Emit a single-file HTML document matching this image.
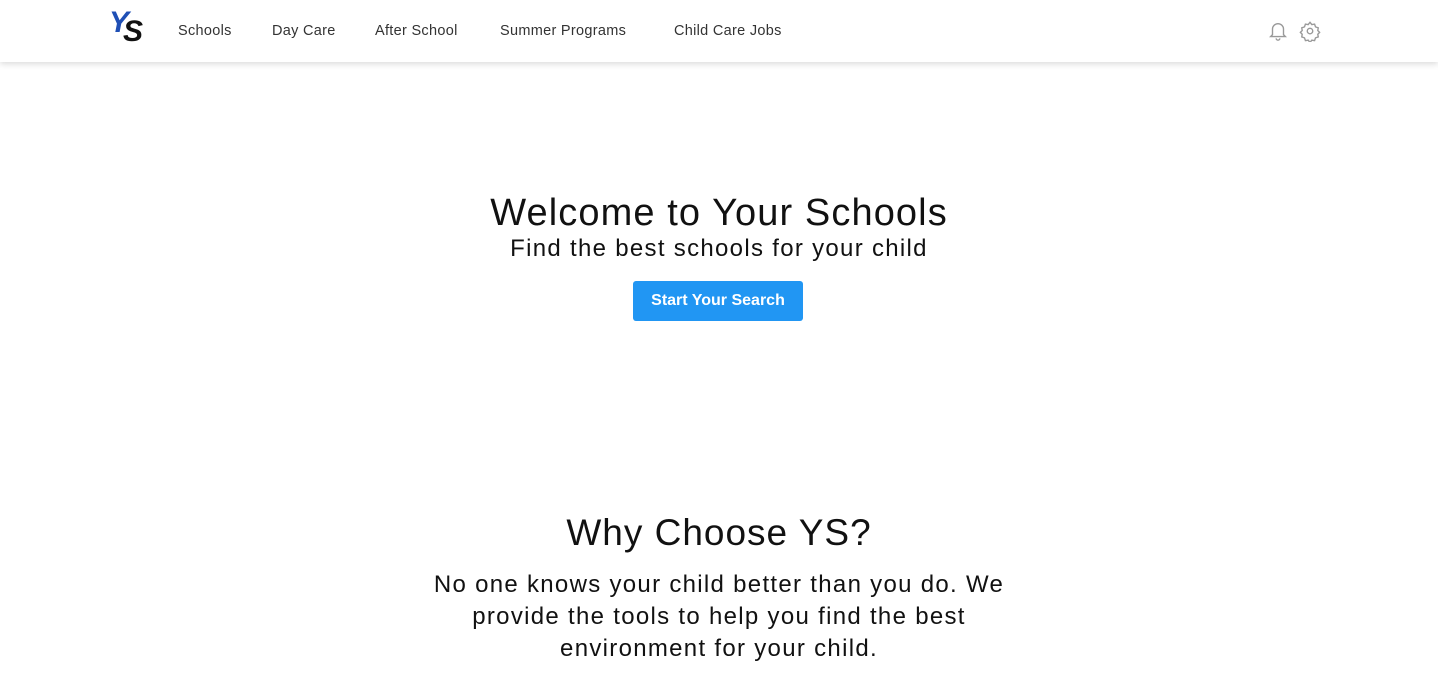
<!DOCTYPE html>
<html><head><style>
body{margin:0;width:1438px;height:685px;overflow:hidden;background:#fff;font-family:"Liberation Sans",sans-serif;color:#111}
.nav{position:absolute;top:0;left:0;width:1438px;height:62px;background:#fff;box-shadow:0 2px 6px rgba(0,0,0,.15)}
.nav a{position:absolute;top:23px;font-size:14.5px;color:#333;text-decoration:none;letter-spacing:.3px}
.logo{position:absolute;left:109px;top:10px;font-weight:bold;font-style:italic;font-size:30px;letter-spacing:-6px}
.c{position:absolute;left:0;width:1438px;text-align:center}
</style></head><body>
<div class="nav">
<div class="logo"><span style="color:#1f4fb5;position:relative;top:-4px">Y</span><span style="color:#111;position:relative;top:5px">S</span></div>
<a style="left:178px">Schools</a>
<a style="left:272px">Day Care</a>
<a style="left:375px">After School</a>
<a style="left:500px">Summer Programs</a>
<a style="left:674px">Child Care Jobs</a>
<svg style="position:absolute;left:1267px;top:20px" width="22" height="22" viewBox="0 0 24 24" fill="none" stroke="#999" stroke-width="1.5"><path d="M6 16V10a6 6 0 0 1 12 0v6l2 2H4z"/><path d="M10 20a2 2 0 0 0 4 0"/></svg>
<svg style="position:absolute;left:1299px;top:20px" width="22" height="22" viewBox="0 0 24 24" fill="none" stroke="#999" stroke-width="1.5"><circle cx="12" cy="12" r="3"/><path d="M12 2.5l2 2.5 3-.5 1 3 3 1-.5 3 2 2-2 2 .5 3-3 1-1 3-3-.5-2 2.5-2-2.5-3 .5-1-3-3-1 .5-3-2-2 2-2-.5-3 3-1 1-3 3 .5z"/></svg>
</div>
<div class="c" style="top:192px;font-size:38px;letter-spacing:1.1px">Welcome to Your Schools</div>
<div class="c" style="top:235px;font-size:24px;letter-spacing:1.3px">Find the best schools for your child</div>
<div style="position:absolute;left:633px;top:281px;width:170px;height:40px;background:#2196f3;border-radius:3px;color:#fff;font-weight:bold;font-size:16px;line-height:40px;text-align:center">Start Your Search</div>
<div class="c" style="top:512px;font-size:37px;letter-spacing:1px">Why Choose YS?</div>
<div class="c" style="top:569px;font-size:24px;line-height:32px;letter-spacing:1.3px">No one knows your child better than you do. We<br>provide the tools to help you find the best<br>environment for your child.</div>
</body></html>
